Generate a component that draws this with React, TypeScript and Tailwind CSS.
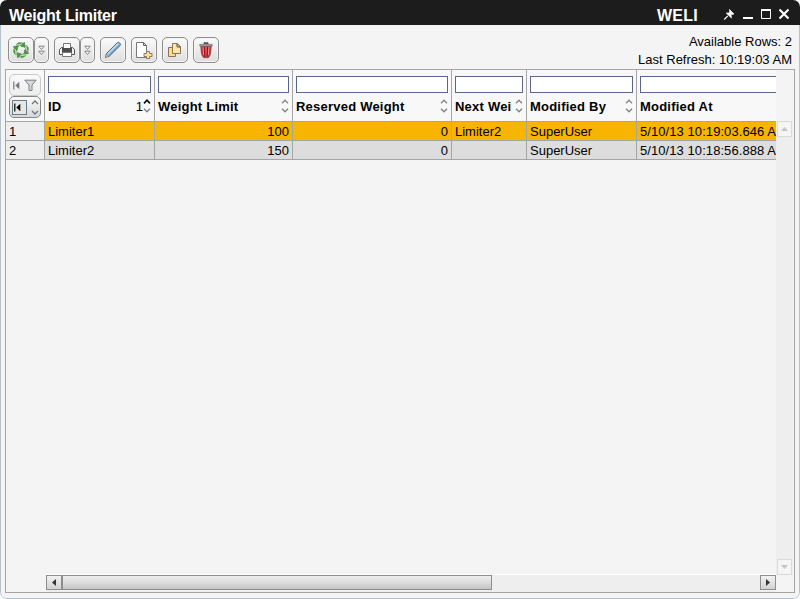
import React from "react";

const columns = [
  { name: "ID", cells: ["Limiter1", "Limiter2"], width: "w-[110px]", order: "1" },
  { name: "Weight Limit", cells: ["100", "150"], width: "w-[138px]", right: true },
  { name: "Reserved Weight", cells: ["0", "0"], width: "w-[159px]", right: true },
  { name: "Next Wei", cells: ["Limiter2", ""], width: "w-[75px]" },
  { name: "Modified By", cells: ["SuperUser", "SuperUser"], width: "w-[110px]" },
  { name: "Modified At", cells: ["5/10/13 10:19:03.646 AM", "5/10/13 10:18:56.888 AM"], width: "w-[180px]", last: true },
];

function SortArrows({ active = false }: { active?: boolean }) {
  return (
    <svg width="8" height="14" viewBox="0 0 8 14" fill="none" strokeWidth={active ? 1.7 : 1.3} className="-mt-[2px] shrink-0">
      <path d="M1 4.3 4 1.2l3 3.1" stroke={active ? "#111" : "#858585"} />
      <path d="M1 9.7l3 3.1 3-3.1" stroke="#858585" strokeWidth="1.4" />
    </svg>
  );
}

function ToolButton({ children, narrow = false }: { children: React.ReactNode; narrow?: boolean }) {
  return (
    <button
      className={
        (narrow ? "w-[15px] " : "w-[26px] ") +
        "flex h-[26px] shrink-0 items-center justify-center rounded-[5px] border border-[#8d8d8d] bg-linear-to-b from-[#fbfbfb] to-[#dddddd] shadow-[inset_0_0_0_1px_#f5f5f5]"
      }
    >
      {children}
    </button>
  );
}

function DoubleChevron() {
  return (
    <svg width="7" height="11" viewBox="0 0 7 11" fill="#fff" stroke="#777" strokeWidth=".9">
      <path d="M.8 1.2h5.4L3.5 4.5zM.8 6.2h5.4L3.5 9.5z" />
    </svg>
  );
}

function RecycleIcon() {
  return (
    <svg width="20" height="20" viewBox="0 0 20 20" fill="none">
      {[0, 90, 180, 270].map((a) => (
        <g key={a} transform={`rotate(${a} 10 10)`}>
          <path d="M5.2 4.6Q7.4 2 10.4 2.6L12 3.6 10.7 5.6Q8.6 4.4 7 6.4z" fill="#e4f3df" stroke="#5f705c" strokeWidth=".7" />
          <path d="M6.5 4.3Q8.2 2.8 10.4 3.8" stroke="#35ac28" strokeWidth="1.3" />
          <path d="m13.3 2.2.9 5-4.5-1.1z" fill="#35ac28" stroke="#4b6546" strokeWidth=".6" />
        </g>
      ))}
    </svg>
  );
}

function PrinterIcon() {
  return (
    <svg width="18" height="16" viewBox="0 0 18 16">
      <path d="M3.5 5.5h11l2 2v5h-15v-5z" fill="#eee" stroke="#555" />
      <path d="M5.5 6.5V1.5h7v5" fill="#fff" stroke="#777" />
      <path d="M4 6h10v5H4z" fill="#4b4d4f" />
      <path d="M4.5 10.5h9v4h-9z" fill="#fff" stroke="#777" />
      <path d="M2.5 8v4M15.5 8v4" stroke="#fff" />
    </svg>
  );
}

function PencilIcon() {
  return (
    <svg width="18" height="18" viewBox="0 0 18 18">
      <path d="m1.5 16.3 1-3.8L13.4 1.7q1-.9 2 0l.8.9q.9.9 0 1.8L5.3 15.2z" fill="#8dbbe0" stroke="#59646c" />
      <path d="M4 12.6 14 2.8" stroke="#c1e0f6" strokeWidth="1.2" />
      <path d="M5.6 14 15.7 4" stroke="#5589af" />
      <path d="m1.5 16.3.8-3.1 2.3 2.2z" fill="#ddd" stroke="#666" strokeWidth=".5" />
    </svg>
  );
}

function NewPageIcon() {
  return (
    <svg width="18" height="18" viewBox="0 0 18 18">
      <path d="M1.5 1.5h7l3 3v12h-10z" fill="#fff" stroke="#777" />
      <path d="M8.5 1.5v3h3z" fill="#ddd" stroke="#666" />
      <path d="M11.5 10.5h3v2H17v3h-2.5v2h-3v-2H9v-3h2.5z" fill="#ffe29a" stroke="#8b7b63" />
    </svg>
  );
}

function CopyIcon() {
  return (
    <svg width="16" height="16" viewBox="0 0 16 16" stroke="#85765b">
      <path d="M1.5 5.5h7v9h-7z" fill="#ffdc83" />
      <path d="M5.5 1.5H10L13.5 5v6.5h-8z" fill="#ffe6a7" />
      <path d="M10 1.5V5h3.5z" fill="#f7d98e" stroke="#555" />
    </svg>
  );
}

function TrashIcon() {
  return (
    <svg width="14" height="17" viewBox="0 0 14 17">
      <path d="M1.8 4.2h10.4l-.5 6q-.4 3.7-2.3 5.5H4.6q-1.9-1.8-2.3-5.5z" fill="#d2232a" stroke="#7d4547" strokeWidth=".8" />
      <path d="m4 5 .6 8M7 5v9.5M10 5l-.6 8" stroke="#f39a9a" strokeWidth="1" />
      <path d="m5.5 5 .5 9.5M8.5 5 8 14.5" stroke="#7c0f14" strokeWidth=".9" />
      <path d="M5 2V.8h4V2" fill="#555" stroke="#555" />
      <path d="M.8 2.4h12.4v1.7H.8z" fill="#aaa" stroke="#666" strokeWidth=".7" />
    </svg>
  );
}

function FirstArrow() {
  return (
    <svg width="7" height="9" viewBox="0 0 7 9" className="shrink-0">
      <path d="M.8.5v8" stroke="currentColor" strokeWidth="1.2" />
      <path d="M6.3.7v7.6l-4-3.8z" fill="currentColor" />
    </svg>
  );
}

export default function App() {
  return (
    <div className="h-[599px] w-[800px] bg-white font-['Liberation_Sans',Arial,sans-serif] text-[13px] leading-[18px] text-black">
      <div className="flex h-full flex-col overflow-hidden rounded-[7px] bg-[#f4f4f4]">
        <header className="flex h-[25px] shrink-0 items-center bg-[#1c1c1c] pl-[9px] pr-[9px] text-white">
          <h1 className="mt-[6px] text-[16px] font-bold tracking-[-0.22px]">Weight Limiter</h1>
          <strong className="mt-[6px] ml-auto mr-[25px] text-[16px] tracking-[0.25px]">WELI</strong>
          <svg width="68" height="15" viewBox="0 0 68 15" fill="none" className="mt-1">
            <path d="m6.5 2.5 4.5 4.5-2 .3-.8 1.2.2 2.5-5.2-5 2.5.1 1-1.2z" fill="#fff" stroke="#fff" strokeWidth=".7" />
            <path d="M4.8 8.8 1.2 12.5" stroke="#fff" strokeWidth="1.2" />
            <path d="M20 11h10" stroke="#fff" strokeWidth="2" />
            <path d="M38.5 3v8.5h9V3" stroke="#fff" />
            <path d="M38 3h10" stroke="#fff" strokeWidth="2" />
            <path d="m56.5 2.5 9 9m0-9-9 9" stroke="#fff" strokeWidth="2.2" />
          </svg>
        </header>

        <div className="flex grow flex-col rounded-b-[6px] border-x border-b border-[#b3c2cb] px-1 pb-[5px]">
          <div className="flex h-11 shrink-0 justify-between pl-[3px] pr-[3px]">
            <div className="flex pt-3">
              <ToolButton><RecycleIcon /></ToolButton>
              <ToolButton narrow><DoubleChevron /></ToolButton>
              <div className="ml-[5px] flex">
                <ToolButton><PrinterIcon /></ToolButton>
                <ToolButton narrow><DoubleChevron /></ToolButton>
              </div>
              <div className="ml-[5px] flex gap-[5px]">
                <ToolButton><PencilIcon /></ToolButton>
                <ToolButton><NewPageIcon /></ToolButton>
                <ToolButton><CopyIcon /></ToolButton>
                <ToolButton><TrashIcon /></ToolButton>
              </div>
            </div>
            <div className="pt-2 text-right">
              <p>Available Rows: 2</p>
              <p>Last Refresh: 10:19:03 AM</p>
            </div>
          </div>

          <main className="flex h-[524px] flex-col border border-[#a5a5a5]">
            <div className="flex grow">
              <div className="flex w-[770px] overflow-hidden">
                <div className="w-[39px] shrink-0">
                  <div className="flex h-[52px] flex-col border-r border-b border-[#a5a5a5] bg-[#f8f8f8] pt-1 pl-[3px]">
                    <div className="flex h-[22px] w-8 items-center justify-center gap-1 rounded-[5px] border border-[#c8c8c8] bg-linear-to-b from-[#fafafa] to-[#ededed] text-[#777]">
                      <FirstArrow />
                      <svg width="13" height="13" viewBox="0 0 13 13" fill="#d5dadd" stroke="#7a8084">
                        <path d="M.8 1.2h11.4L8 6v5.5H5V6z" />
                      </svg>
                    </div>
                    <div className="flex h-[22px] w-8 items-center gap-1 rounded-[5px] border border-[#858585] bg-linear-to-b from-[#fafafa] to-[#d8d8d8] pl-[2px]">
                      <span className="flex h-[15px] w-[15px] items-center justify-start border border-[#657d86] bg-[#e7e7e7] pl-px"><FirstArrow /></span>
                      <svg width="8" height="15" viewBox="0 0 8 15" fill="none" stroke="#607985" strokeWidth="1.3">
                        <path d="m1 4 3-3 3 3M1 11l3 3 3-3" />
                      </svg>
                    </div>
                  </div>
                  <div className="h-[19px] border-r border-b border-[#a5a5a5] bg-[#eeeeee] pt-px pl-[3px]">1</div>
                  <div className="h-[19px] border-r border-b border-[#a5a5a5] bg-[#eeeeee] pt-px pl-[3px]">2</div>
                </div>
                {columns.map((c) => (
                  <section key={c.name} className={`${c.width} shrink-0`}>
                    <div className={`h-[52px] border-b border-[#a5a5a5] bg-[#f8f8f8] px-[3px] pt-[6px] ${c.last ? "" : "border-r"}`}>
                      <input aria-label={c.name} className="block h-[17px] w-full border border-[#5b668d] bg-white" />
                      <div className="mt-[5px] flex h-[18px] items-center">
                        <span className="grow overflow-hidden font-bold tracking-[0.22px] whitespace-nowrap">{c.name}</span>
                        {c.order && <span>{c.order}</span>}
                        {!c.last && <SortArrows active={!!c.order} />}
                      </div>
                    </div>
                    {c.cells.map((value, i) => (
                      <div
                        key={i}
                        className={`h-[19px] border-b border-[#a5a5a5] px-[3px] pt-px whitespace-nowrap ${i === 0 ? "bg-[#f7b500]" : "bg-[#dddddd]"} ${c.right ? "text-right" : ""} ${c.last ? "tracking-[0.07px]" : "border-r"}`}
                      >
                        {value}
                      </div>
                    ))}
                  </section>
                ))}
              </div>
              <div className="-mb-px flex w-[17px] shrink-0 flex-col bg-[#eeeeee] pl-px">
                <div className="-ml-px h-[51px] bg-[#f4f4f4]" />
                <div className="flex h-4 w-[15px] items-center justify-center border border-[#dadada] bg-[#f5f5f5]">
                  <svg width="7" height="4" fill="#c5c5c5"><path d="m0 4 3.5-4L7 4z" /></svg>
                </div>
                <div className="mt-auto flex h-4 w-[15px] items-center justify-center border border-[#dadada] bg-[#f5f5f5]">
                  <svg width="7" height="4" fill="#c5c5c5"><path d="m0 0 3.5 4L7 0z" /></svg>
                </div>
              </div>
            </div>
            <div className="flex h-[18px] shrink-0 pl-10 pr-[18px]">
              <div className="flex grow border-t border-white bg-[#eeeeee]">
                <div className="flex h-[15px] w-4 items-center justify-center border border-[#8e8e8e] bg-linear-to-b from-[#f2f2f2] to-[#d2d2d2]">
                  <svg width="4" height="7" fill="#333"><path d="M4 0v7L0 3.5z" /></svg>
                </div>
                <div className="h-[15px] w-[430px] border border-[#8e8e8e] bg-linear-to-b from-[#eeeeee] via-[#dcdcdc] via-50% to-[#c4c4c4]" />
                <div className="ml-auto flex h-[15px] w-4 items-center justify-center border border-[#8e8e8e] bg-linear-to-b from-[#f2f2f2] to-[#d2d2d2]">
                  <svg width="4" height="7" fill="#333"><path d="M0 0v7l4-3.5z" /></svg>
                </div>
              </div>
            </div>
          </main>
        </div>
      </div>
    </div>
  );
}
